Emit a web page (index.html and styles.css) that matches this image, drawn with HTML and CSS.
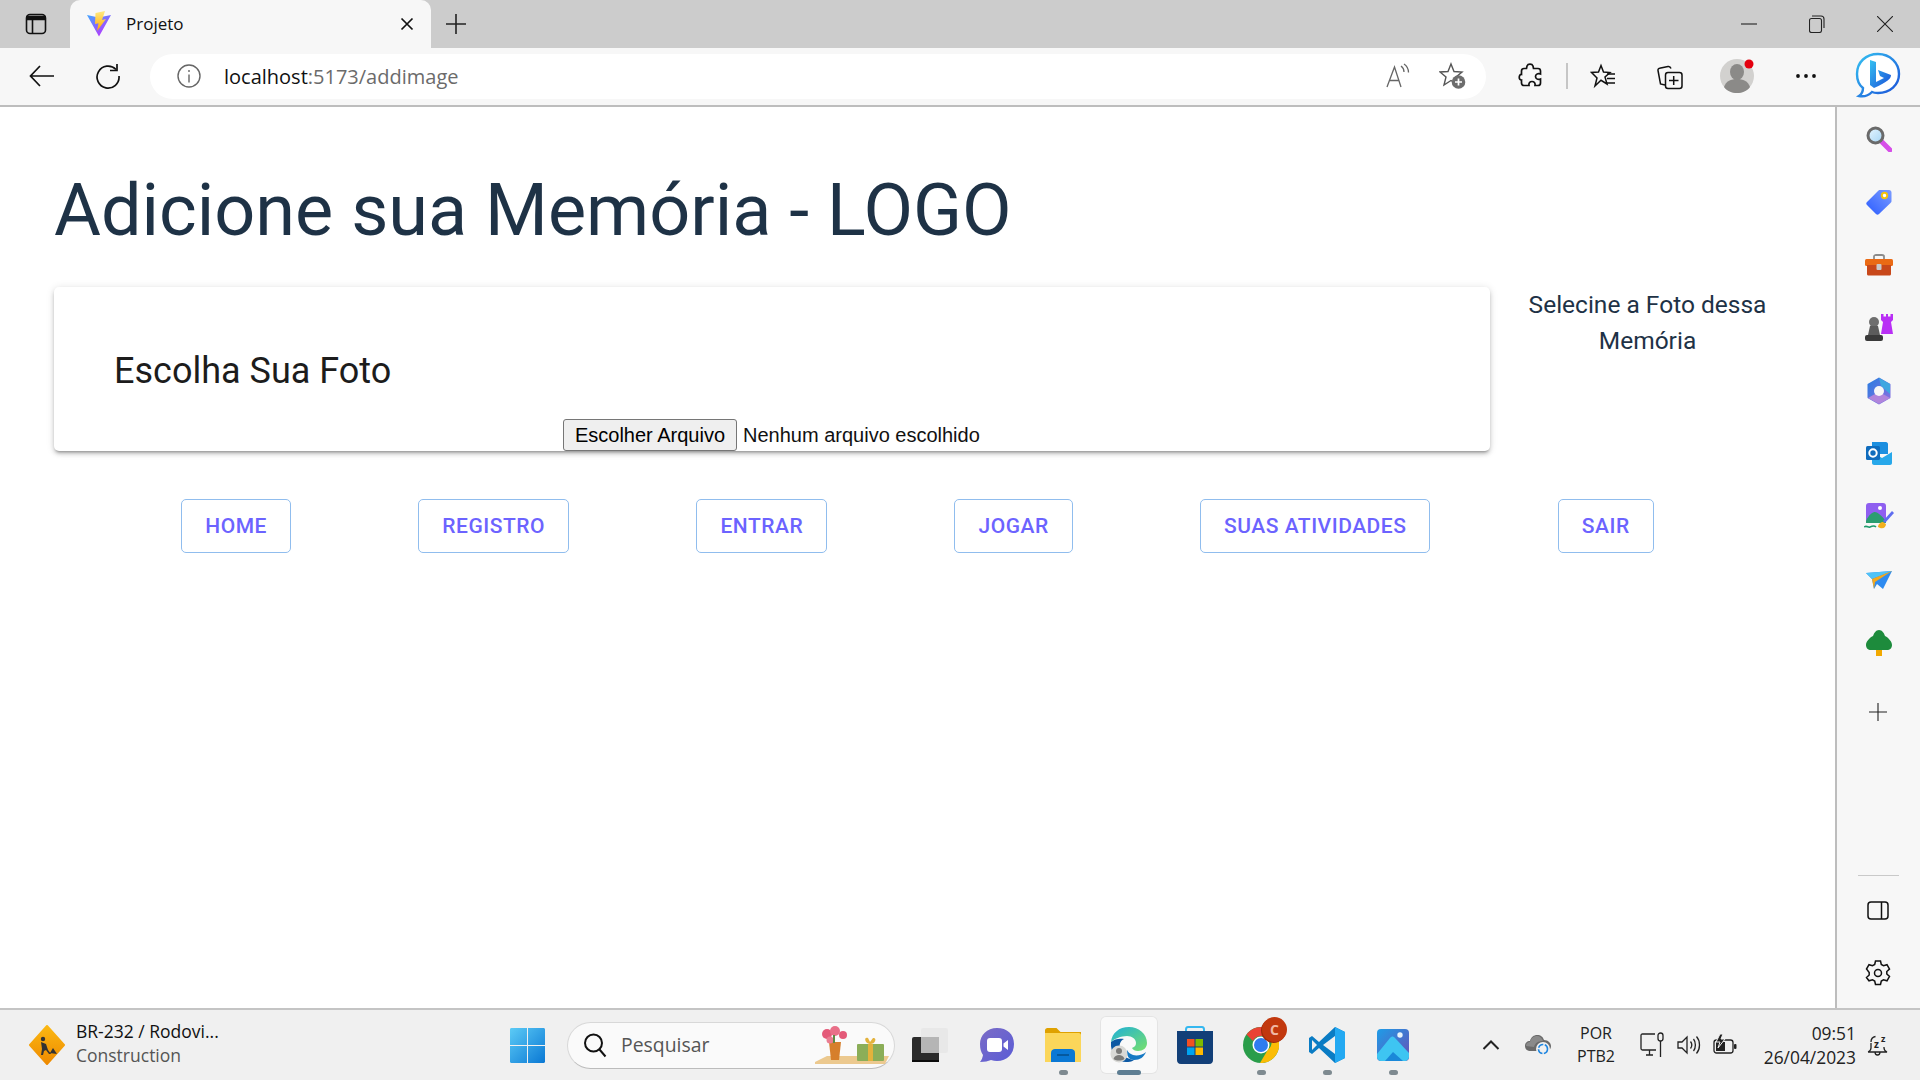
FILE: index.html
```html
<!DOCTYPE html>
<html lang="pt-BR">
<head>
<meta charset="utf-8">
<title>Projeto</title>
<link rel="stylesheet" href="styles.css">
</head>
<body>
<div class="window">
  <header class="tabstrip">
    <div class="strip-btn"><svg width="22" height="22" viewBox="0 0 22 22" fill="none" stroke="#111" stroke-width="1.6"><rect x="1.5" y="1.5" width="19" height="19" rx="3.5"/><path d="M2 3.5h18v3H2z" fill="#111"/><path d="M7.5 6.5v14"/></svg></div>
    <div class="tab">
      <svg class="tab-fav" width="26" height="26" viewBox="0 0 26 26"><defs><linearGradient id="vb" x1="0" y1="0" x2="0.7" y2="1"><stop offset="0" stop-color="#41a6ff"/><stop offset="1" stop-color="#bd34fe"/></linearGradient><linearGradient id="vy" x1="0" y1="0" x2="0" y2="1"><stop offset="0" stop-color="#ffea83"/><stop offset="1" stop-color="#ffa800"/></linearGradient></defs><path d="M1 4 12.500 6.500 25 4 13 25.500z" fill="url(#vb)"/><path d="M19 0 9.500 2 9 13 12.500 12.300 11 20 20 8 16 9z" fill="url(#vy)"/></svg>
      <span class="tab-title">Projeto</span>
      <svg class="tab-close" width="14" height="14" viewBox="0 0 14 14" stroke="#111" stroke-width="1.7"><path d="M1.500 1.500l11 11M12.500 1.500l-11 11"/></svg>
    </div>
    <div class="strip-plus"><svg width="22" height="22" viewBox="0 0 22 22" stroke="#222" stroke-width="1.600"><path d="M11 1v20M1 11h20"/></svg></div>
    <div class="win-controls">
      <div class="win-btn"><svg width="16" height="16" viewBox="0 0 16 16" stroke="#222" stroke-width="1.100"><path d="M0 8h16"/></svg></div>
      <div class="win-btn"><svg width="16" height="18" viewBox="0 0 16 18" fill="none" stroke="#222" stroke-width="1.100"><rect x="0.500" y="3.500" width="12" height="14" rx="2"/><path d="M3 1h9c2 0 3 1 3 3v9"/></svg></div>
      <div class="win-btn"><svg width="16" height="16" viewBox="0 0 16 16" stroke="#222" stroke-width="1.100"><path d="M0 0l16 16M16 0L0 16"/></svg></div>
    </div>
  </header>

  <nav class="toolbar">
    <div class="nav-btn"><svg width="26" height="24" viewBox="0 0 26 24" fill="none" stroke="#111" stroke-width="1.700"><path d="M25 12H2M11 2 1.500 12 11 22"/></svg></div>
    <div class="nav-btn"><svg width="26" height="26" viewBox="0 0 26 26" fill="none" stroke="#111" stroke-width="1.700"><path d="M21 6.500A11 11 0 1 0 24 13"/><path d="M22 1v6.500h-7"/></svg></div>
    <div class="address">
      <svg class="addr-info" width="24" height="24" viewBox="0 0 24 24" fill="none" stroke="#666" stroke-width="1.400"><circle cx="12" cy="12" r="11"/><path d="M12 10.500v8M12 6v2"/></svg>
      <span class="url"><span class="url-host">localhost</span>:5173/addimage</span>
      <svg class="addr-read" width="26" height="26" viewBox="0 0 26 26" fill="none" stroke="#666" stroke-width="1.300"><path d="M1 24 8.500 4 15 24M3.500 17.500H13"/><path d="M15 3c2 1.500 3 3.500 3 6M18 1c3 2 4.500 5 4.500 8.500"/></svg>
      <svg class="addr-star" width="28" height="28" viewBox="0 0 28 28"><path d="M12 2l3 7.500 8 .5-6 5 2 8-7-4.500L5 23l2-8-6-5 8-.5z" fill="none" stroke="#555" stroke-width="1.400"/><circle cx="19.500" cy="20" r="6.800" fill="#6c6c6c"/><path d="M19.500 16.500v7M16 20h7" stroke="#fff" stroke-width="1.700"/></svg>
    </div>
    <div class="tool tool-ext"><svg width="24" height="26" viewBox="0 0 24 26" fill="none" stroke="#111" stroke-width="1.700"><path d="M9 3c1-2.500 5-2.500 6 0l.5 2.500H20c1.500 0 2.500 1 2.500 2.500v3c-3-1-5 .5-5 2.500s2 3.500 5 2.500v4c0 1.500-1 2.500-2.500 2.500h-3c.5-2.500-1-4-3-4s-3.500 1.500-3 4H6c-1.500 0-2.500-1-2.500-2.500v-3c-3 .5-3-6 0-5.500V8C3.500 6.500 4.500 5.500 6 5.500h2.500z"/></svg></div>
    <div class="tool-sep"></div>
    <div class="tool tool-fav"><svg width="26" height="26" viewBox="0 0 26 26" fill="none" stroke="#111" stroke-width="1.500"><path d="M11 2.500 13.500 9l6.500.5-5 4.500 2 7-6-3.700L5 23l2-8-5.500-5.500 7-.5z"/><path d="M17 11h8M17 15.500h8M17 20h8"/></svg></div>
    <div class="tool tool-coll"><svg width="26" height="28" viewBox="0 0 26 28" fill="none" stroke="#111" stroke-width="1.500"><path d="M8 23 3.500 22 1 8.500c-.2-1 .3-2 1.500-2.200L11 4.500c1.500-.3 2.500.5 3 2"/><rect x="8.500" y="10.500" width="16.500" height="16" rx="2.500"/><path d="M16.700 14v9M12 18.500h9.500"/></svg></div>
    <div class="tool tool-avatar">
      <svg width="36" height="36" viewBox="0 0 36 36"><circle cx="17" cy="18" r="17" fill="#d2d1cf"/><ellipse cx="17" cy="14" rx="7" ry="8" fill="#8b8a88"/><path d="M4 29c2-6 7-8 13-8s11 2 13 8c-3 4-8 6-13 6S7 33 4 29z" fill="#8b8a88"/><circle cx="29" cy="6" r="4.500" fill="#e4000f"/></svg>
    </div>
    <div class="tool tool-more"><svg width="22" height="6" viewBox="0 0 22 6" fill="#111"><circle cx="3" cy="3" r="1.900"/><circle cx="11" cy="3" r="1.900"/><circle cx="19" cy="3" r="1.900"/></svg></div>
    <div class="tool tool-bing">
      <svg width="46" height="46" viewBox="0 0 46 46"><defs><linearGradient id="bg1" x1="0" y1="0" x2="1" y2="1"><stop offset="0" stop-color="#35c1f1"/><stop offset="1" stop-color="#1a4fd8"/></linearGradient></defs><path d="M23 2C11 2 2 10 2 22c0 6 2 11 6 14 0 3-1 6-4 8 5 1 10-1 13-4 2 1 4 1 6 1 12 0 21-8 21-19S35 2 23 2z" fill="#fff" stroke="url(#bg1)" stroke-width="2.400"/><path d="M15 8l6 2v20l8-4-4-2-2-6 13 5c0 4-4 7-17 13l-4-3z" fill="url(#bg1)"/></svg>
    </div>
  </nav>

  <div class="body">
    <main class="page">
      <h1 class="title">Adicione sua Memória - LOGO</h1>
      <div class="content">
        <section class="card">
          <h2 class="card-title">Escolha Sua Foto</h2>
          <div class="file-row"><button class="file-btn" type="button">Escolher Arquivo</button><span class="file-name">Nenhum arquivo escolhido</span></div>
        </section>
        <p class="hint">Selecine a Foto dessa Memória</p>
      </div>
      <div class="actions">
        <a class="action">Home</a>
        <a class="action">Registro</a>
        <a class="action">Entrar</a>
        <a class="action">Jogar</a>
        <a class="action">Suas Atividades</a>
        <a class="action">Sair</a>
      </div>
    </main>

    <aside class="sidebar">
      <div class="side-slot"><svg width="26" height="26" viewBox="0 0 26 26"><defs><linearGradient id="sg" x1="0" y1="0" x2="1" y2="1"><stop offset="0" stop-color="#e8f6ff"/><stop offset="1" stop-color="#a4d4f4"/></linearGradient></defs><path d="M15 15l9 9" stroke="#d64ee8" stroke-width="5" stroke-linecap="round"/><circle cx="9.500" cy="9.500" r="7.500" fill="url(#sg)" stroke="#6a6a6a" stroke-width="3"/></svg></div>
      <div class="side-slot"><svg width="26" height="26" viewBox="0 0 26 26"><defs><linearGradient id="tg" x1="0" y1="1" x2="1" y2="0"><stop offset="0" stop-color="#2a5cff"/><stop offset="1" stop-color="#7c9cff"/></linearGradient></defs><path d="M14 1h9c1.500 0 2.500 1 2.500 2.500V12c0 1-.5 1.500-1 2L13 25c-1 1-2 1-3 0L1 16c-1-1-1-2 0-3L12 2c.5-.5 1-1 2-1z" fill="url(#tg)"/><circle cx="18.500" cy="6.500" r="2.700" fill="#fff" stroke="#f4c20d" stroke-width="2"/></svg></div>
      <div class="side-slot"><svg width="28" height="22" viewBox="0 0 28 22"><path d="M9 6V2.500C9 1.500 10 1 11 1h6c1 0 2 .5 2 1.500V6" fill="none" stroke="#8c8c8c" stroke-width="1.800"/><rect y="5" width="28" height="7" rx="1.500" fill="#ea6a14"/><path d="M2 11h24v9c0 1-1 1.500-1.500 1.500h-21C3 21.500 2 21 2 20z" fill="#c8481a"/><rect x="11.500" y="10" width="5" height="6" rx="1" fill="#c9c9c9"/></svg></div>
      <div class="side-slot"><svg width="28" height="28" viewBox="0 0 28 28"><circle cx="9" cy="8" r="5" fill="#6e6e6e"/><path d="M5 12h8l2 9H3z" fill="#5c5c5c"/><rect y="21" width="18" height="6" rx="2" fill="#3a3a3a"/><path d="M16 0h2.500v2.500H21V0h2v2.500h2.500V0H28v6l-2 2 2 12H16l2-12-2-2z" fill="#b92ff5"/></svg></div>
      <div class="side-slot"><svg width="26" height="28" viewBox="0 0 26 28"><defs><linearGradient id="m1" x1="0" y1="0" x2="1" y2="1"><stop offset="0" stop-color="#2a7de1"/><stop offset="1" stop-color="#8b6ee0"/></linearGradient></defs><path d="M13 1.500l10.500 6v13L13 26.500l-10.500-6v-13z" fill="url(#m1)" stroke="url(#m1)" stroke-width="2" stroke-linejoin="round"/><path d="M13 1l11 6v10L15 9z" fill="#3fa7e0"/><path d="M2 21l11 6 11-6-7-4H9z" fill="#b085dc"/><circle cx="13" cy="14" r="5" fill="#f7f7f7"/></svg></div>
      <div class="side-slot"><svg width="26" height="24" viewBox="0 0 26 24"><path d="M6 0h14c1 0 2 1 2 2v10H6z" fill="#1c8fe0"/><path d="M6 10l10 6 10-6v11c0 1-1 2-2 2H8c-1 0-2-1-2-2z" fill="#28a8ea"/><rect y="4" width="14" height="14" rx="1.500" fill="#0f6cbd"/><circle cx="7" cy="11" r="3.700" fill="none" stroke="#fff" stroke-width="2"/></svg></div>
      <div class="side-slot"><svg width="30" height="28" viewBox="0 0 30 28"><rect x="2" width="20" height="20" rx="3" fill="#8f5ff0"/><circle cx="16" cy="5" r="2" fill="#fff"/><path d="M2 18c3-7 7-9 9-9s6 3 11 9v2H2z" fill="#2a9d6f"/><path d="M19 18 28 8l2 2-9 10z" fill="#5f6df0"/><path d="M14 24c0-3 3-5 5-5l3 2c0 3-3 6-8 3z" fill="#f2b01e"/><path d="M0 24c3-2 4 1 6 0s4-2 6 0" fill="none" stroke="#1c9b6a" stroke-width="1.500"/></svg></div>
      <div class="side-slot"><svg width="26" height="18" viewBox="0 0 26 18"><path d="M0 2 26 0 17 18 11 13 8 18 6 8z" fill="#2e8bf0"/><path d="M0 2 26 0 6 8z" fill="#4fc3f7"/><path d="M6 8 26 0 9 11 8 18z" fill="#f5a81c"/></svg></div>
      <div class="side-slot"><svg width="26" height="26" viewBox="0 0 26 26"><rect x="10" y="18" width="6" height="8" fill="#f2a900"/><path d="M13 0c3 0 5 3 6 6 4 2 7 6 7 9 0 3-2 5-5 5H5c-3 0-5-2-5-5 0-3 3-7 7-9 1-3 3-6 6-6z" fill="#1d8b3c"/></svg></div>
      <div class="side-slot side-plus"><svg width="18" height="18" viewBox="0 0 18 18" stroke="#222" stroke-width="1.100"><path d="M9 0v18M0 9h18"/></svg></div>
      <div class="side-bottom">
        <div class="side-rule"></div>
        <div class="side-slot side-panel"><svg width="22" height="19" viewBox="0 0 22 19" fill="none" stroke="#111" stroke-width="1.500"><rect x="1" y="1" width="20" height="17" rx="3"/><path d="M14.500 1v17"/></svg></div>
        <div class="side-slot side-gear"><svg width="26" height="26" viewBox="0 0 26 26" fill="none" stroke="#111" stroke-width="1.500"><circle cx="13" cy="13" r="3.500"/><path d="M10.500 1h5l.8 3.500 2.200 1.200 3.500-1 2.500 4.300-2.700 2.500v2.500l2.700 2.500-2.500 4.300-3.500-1-2.200 1.200-.8 3.500h-5l-.8-3.500-2.200-1.200-3.500 1L1.500 17.500 4.200 15v-2.500L1.500 9 4 4.700l3.500 1 2.200-1.200z"/></svg></div>
      </div>
    </aside>
  </div>

  <footer class="taskbar">
    <div class="weather">
      <svg width="38" height="40" viewBox="0 0 38 40"><defs><linearGradient id="wg" x1="0" y1="0" x2="0" y2="1"><stop offset="0" stop-color="#fbb812"/><stop offset="1" stop-color="#ee8a00"/></linearGradient></defs><path d="M19 1 36 20 19 39 2 20z" fill="url(#wg)" stroke="url(#wg)" stroke-width="2" stroke-linejoin="round"/><circle cx="15" cy="14" r="2.200" fill="#333"/><path d="M13 17l5 2 2 6 3 4h-2l-3-4-2 1-1 4h-2l1-6zM22 28l3-5 4 6z" fill="#333"/></svg>
      <div class="weather-text"><span class="weather-name">BR-232 / Rodovi...</span><span class="weather-sub">Construction</span></div>
    </div>
    <div class="start"><svg width="35" height="35" viewBox="0 0 35 35"><defs><linearGradient id="w1" x1="0" y1="0" x2="1" y2="1"><stop offset="0" stop-color="#5ccbf6"/><stop offset="1" stop-color="#0a78d4"/></linearGradient></defs><path d="M1.500 0H17v17H0V1.500C0 .6.600 0 1.500 0zM18 0h15.500c.9 0 1.500.6 1.500 1.500V17H18zM0 18h17v17H1.500C.6 35 0 34.400 0 33.500zM18 18h17v15.500c0 .9-.6 1.500-1.500 1.500H18z" fill="url(#w1)"/></svg></div>
    <div class="search">
      <svg class="search-icon" width="24" height="26" viewBox="0 0 24 26" fill="none" stroke="#111" stroke-width="2"><circle cx="10.500" cy="11" r="8.500"/><path d="M16.500 17.500l6 7"/></svg>
      <span class="search-text">Pesquisar</span>
      <svg class="search-art" width="76" height="40" viewBox="0 0 76 40"><path d="M2 36 14 30H76L72 38H2z" fill="#ecc98f"/><path d="M16 16h12l-2 18H18z" fill="#d67f2c"/><circle cx="14" cy="8" r="5" fill="#e45a79"/><circle cx="22" cy="5" r="5" fill="#e96f88"/><circle cx="30" cy="9" r="4" fill="#e45a79"/><circle cx="17" cy="14" r="3.500" fill="#ea7d92"/><path d="M21 9v8" stroke="#5d8a45" stroke-width="2"/><rect x="44" y="18" width="27" height="17" rx="1" fill="#8bae58"/><rect x="55" y="18" width="5" height="17" fill="#e3b23c"/><path d="M57 18c-6-1-6-8-2-6l2 4 3-4c4-1 3 6-3 6z" fill="#e3b23c"/></svg>
    </div>
    <div class="apps">
      <div class="app"><svg width="38" height="36" viewBox="0 0 38 36"><rect y="10" width="27" height="25" rx="2" fill="#2b2b2b"/><rect y="33" width="27" height="2" fill="#0c0c0c"/><rect x="9" y="1" width="27" height="25" rx="2" fill="#e6e6e6" fill-opacity=".85"/><rect x="9" y="10" width="18" height="16" fill="#b5b5b5"/></svg></div>
      <div class="app"><svg width="36" height="36" viewBox="0 0 36 36"><defs><linearGradient id="tm" x1="0" y1="0" x2="1" y2="1"><stop offset="0" stop-color="#7b6cc6"/><stop offset="1" stop-color="#5a5cd6"/></linearGradient></defs><path d="M18 1C8 1 1 8 1 17c0 5 1 8 3 11-.5 3-1.500 5-3 7 5 0 8-1 11-2 2 .5 4 1 6 1 10 0 17-7 17-17S28 1 18 1z" fill="url(#tm)"/><rect x="8" y="11" width="15" height="14" rx="3" fill="#fff"/><path d="M24.500 16.500 29 13v10l-4.500-3.500z" fill="#fff"/></svg></div>
      <div class="app app-on"><svg width="36" height="34" viewBox="0 0 36 34"><path d="M0 2.500C0 1 1 0 2.500 0h9l4 4H36v6H0z" fill="#dfa100"/><path d="M0 5h34c1 0 2 1 2 2v27H0z" fill="#fbd65a"/><path d="M6 31V25c0-3 2-4 4-4h16c2 0 4 1 4 4v9H6z" fill="#0a78d4"/><path d="M12 27h12" stroke="#044f8c" stroke-width="1.500"/></svg><i class="dot"></i></div>
      <div class="app app-active"><svg width="38" height="38" viewBox="0 0 38 38"><defs><linearGradient id="e1" x1="0" y1="0" x2="1" y2="1"><stop offset="0" stop-color="#1eb0d8"/><stop offset="1" stop-color="#78e06c"/></linearGradient></defs><path d="M1 16C2 7 9 1 19 1c10 0 18 7 18 16 0 5-4 8-9 8-3 0-5-1-6-3 3-1 4-3 4-5 0-4-4-7-9-7C11 10 4 13 1 16z" fill="url(#e1)"/><path d="M1 16c3-3 9-4 13-3-4 2-5 6-4 10 1 5 6 10 14 11-3 2-5 2-8 2C8 36 0 28 1 16z" fill="#0c59a4"/><path d="M24 34c6 0 10-3 12-8-3 3-9 4-13 3-3-1-5-3-6-5-1 5 2 10 7 10z" fill="#1679c4"/><circle cx="9" cy="28" r="8.500" fill="#d9d9d6"/><circle cx="9" cy="25" r="3" fill="#7b7b79"/><path d="M3.500 33c1-3 3-4 5.500-4s4.500 1 5.500 4c-3 2-8 2-11 0z" fill="#7b7b79"/></svg><i class="dot dot-wide"></i></div>
      <div class="app"><svg width="36" height="38" viewBox="0 0 36 38"><path d="M9 8V3.500C9 2 10 1 11 1h14c1 0 2 1 2 2.500V8" fill="none" stroke="#35b8f0" stroke-width="2"/><path d="M0 5h36v29c0 2-1 4-4 4H4c-3 0-4-2-4-4z" fill="#123f78"/><rect x="10" y="13" width="7.500" height="7.500" fill="#f25022"/><rect x="18.500" y="13" width="7.500" height="7.500" fill="#7fba00"/><rect x="10" y="21.500" width="7.500" height="7.500" fill="#00a4ef"/><rect x="18.500" y="21.500" width="7.500" height="7.500" fill="#ffb900"/></svg></div>
      <div class="app app-on app-chrome"><svg width="36" height="36" viewBox="0 0 36 36"><circle cx="18" cy="18" r="18" fill="#2a9d4a"/><path d="M18 0a18 18 0 0 1 15.600 9H18a9 9 0 0 0-8 5L3.500 7.500A18 18 0 0 1 18 0z" fill="#ea4335"/><path d="M33.600 9A18 18 0 0 1 17 36l8-13.500a9 9 0 0 0 1-13.500z" fill="#fbbc05"/><circle cx="18" cy="18" r="8.500" fill="#fff"/><circle cx="18" cy="18" r="7" fill="#2f7cf0"/></svg><span class="chrome-badge">C</span><i class="dot"></i></div>
      <div class="app app-on"><svg width="36" height="36" viewBox="0 0 36 36"><path d="M26 0l10 5v26l-10 5L10 21 3 27 0 25V11l3-2 7 6z" fill="#0a7cc4"/><path d="M26 0l10 5v26l-10 5z" fill="#23a9f2"/><path d="M26 9 14 18l12 9z" fill="#f0f0f0"/><path d="M3 13l5 5-5 5z" fill="#f0f0f0"/></svg><i class="dot"></i></div>
      <div class="app app-on"><svg width="32" height="32" viewBox="0 0 32 32"><defs><linearGradient id="ph" x1="0" y1="0" x2="1" y2="1"><stop offset="0" stop-color="#1d9de8"/><stop offset="1" stop-color="#6a4fb5"/></linearGradient></defs><rect width="32" height="32" rx="4" fill="url(#ph)"/><circle cx="23" cy="6" r="2.700" fill="#eaf4fb"/><path d="M0 25 13 9c2-2 3-2 5 0l14 15v4c0 2-2 4-4 4H4c-2 0-4-2-4-4z" fill="#3ec5f2"/><path d="M8 32l8-9 10 9z" fill="#1a88d9"/></svg><i class="dot"></i></div>
    </div>
    <div class="tray">
      <div class="tray-slot tray-chev"><svg width="18" height="12" viewBox="0 0 18 12" fill="none" stroke="#222" stroke-width="2"><path d="M1.500 10 9 2.500 16.500 10"/></svg></div>
      <div class="tray-slot tray-cloud"><svg width="26" height="22" viewBox="0 0 26 22"><path d="M6 17C2 17 0 15 0 12s2-5 5-5c1-4 4-6 7-6 4 0 6 2 7 5 4 0 7 3 7 6 0 3-2 5-6 5z" fill="#6a6a6a"/><path d="M1 12c0-3 2-4 4-4 1-4 4-6 7-6 3 0 5 2 6 5-5 0-8 2-9 6z" fill="#8a8a8a"/><circle cx="18" cy="15" r="7" fill="#f0f0f0"/><circle cx="18" cy="15" r="4.500" fill="none" stroke="#1f86e0" stroke-width="1.600" stroke-dasharray="6 1.500"/></svg></div>
      <div class="lang"><span>POR</span><span>PTB2</span></div>
      <div class="tray-slot tray-net"><svg width="24" height="26" viewBox="0 0 24 26" fill="none" stroke="#222" stroke-width="1.300"><path d="M15 2H2.500C1.500 2 1 2.500 1 3.500v13c0 1 .5 1.500 1.500 1.500H16M6 23h7M9.500 18v5"/><rect x="18" y="1" width="5" height="8" rx="2.500"/><path d="M20.500 9v16"/></svg></div>
      <div class="tray-slot tray-vol"><svg width="24" height="20" viewBox="0 0 24 20" fill="none" stroke="#222" stroke-width="1.300"><path d="M1 7v6h4l5 5V2L5 7z"/><path d="M13.500 6.500c1.500 2 1.500 5 0 7M16.500 4c2.500 3 2.500 9 0 12M19.500 1.500c4 4.500 4 12.500 0 17"/></svg></div>
      <div class="tray-slot tray-bat"><svg width="24" height="22" viewBox="0 0 24 22"><rect x="1" y="6" width="19" height="13" rx="2.500" fill="none" stroke="#222" stroke-width="1.300"/><rect x="21" y="10" width="2.500" height="5" rx="1" fill="#222"/><rect x="3" y="8" width="9" height="9" fill="#222"/><path d="M7 0 3 8h4l-2 6 7-9H8l2-5z" fill="#222" stroke="#f0f0f0" stroke-width="1"/></svg></div>
      <div class="clock"><span>09:51</span><span>26/04/2023</span></div>
      <div class="tray-slot tray-bell"><svg width="24" height="24" viewBox="0 0 24 24" fill="none" stroke="#222" stroke-width="1.300"><path d="M4 9c0-3 2-5 4.500-5.500M1 19c2-1 3-2 3-4v-5M17 14v1c0 2 1 3 3 4H1M8 19c0 4 5 4 5 0"/><text class="bell-z" x="7" y="15">z</text><text class="bell-z bell-z2" x="14" y="9">z</text></svg></div>
    </div>
  </footer>
</div>
</body>
</html>
```

FILE: styles.css
```css
* { box-sizing: border-box; }
html, body { margin: 0; height: 100%; }
body { font-family: "Open Sans", "Liberation Sans", sans-serif; color: #111; background: #fff; overflow: hidden; }
svg { display: block; flex: none; }

.window { display: flex; flex-direction: column; width: 1920px; height: 1080px; }

/* tab strip */
.tabstrip { display: flex; align-items: stretch; height: 48px; background: #cccccc; flex: none; }
.strip-btn { width: 70px; display: flex; align-items: center; justify-content: center; padding-left: 2px; }
.tab { width: 361px; display: flex; align-items: center; background: #f7f7f7; border-radius: 10px 10px 0 0; padding: 0 17px 0 16px; }
.tab-title { margin-left: 14px; margin-top: -2px; font-size: 17px; color: #111; flex: 1; }
.strip-plus { width: 50px; display: flex; align-items: center; justify-content: center; }
.win-controls { margin-left: auto; display: flex; padding-right: 1px; }
.win-btn { width: 68px; display: flex; align-items: center; justify-content: center; }

/* toolbar */
.toolbar { display: flex; align-items: center; height: 59px; padding: 0 0 1px 9px; background: #f7f7f7; border-bottom: 2px solid #bdbdbd; flex: none; }
.nav-btn { width: 66px; display: flex; align-items: center; justify-content: center; }
.address { width: 1336px; height: 45px; margin-left: 9px; background: #fff; border-radius: 23px; display: flex; align-items: center; padding: 0 13px 0 27px; }
.url { margin-left: 23px; font-size: 20px; color: #6b6b6b; flex: 1; }
.url-host { color: #111; }
.addr-read { margin-right: 27px; }
.addr-star { margin-right: 6px; }
.tool { display: flex; align-items: center; justify-content: center; height: 100%; }
.tool-ext { width: 60px; margin-left: 14px; }
.tool-sep { width: 2px; height: 26px; background: #c6c6c6; margin-left: 6px; }
.tool-fav { width: 66px; margin-left: 2px; }
.tool-coll { width: 68px; }
.tool-avatar { width: 68px; }
.tool-more { width: 68px; }
.tool-bing { width: 76px; padding-bottom: 3px; }

/* body */
.body { flex: 1; display: flex; min-height: 0; }
.page { flex: 1; padding: 0 54px; min-width: 0; background: #fff; }
.title { margin: 61px 0 33px; font: 400 72px/86px Roboto, sans-serif; color: #1e3246; }
.content { display: flex; align-items: flex-start; }
.card { width: 1436px; height: 164px; flex: none; background: #fff; border-radius: 5px; box-shadow: 0 3px 3px -2px rgba(0,0,0,.3), 0 3px 4px rgba(0,0,0,.16), 0 1px 8px rgba(0,0,0,.12); display: flex; flex-direction: column; padding: 0 0 0 60px; }
.card-title { margin: 63px 0 0; font: 400 36px/1.2 Roboto, sans-serif; color: #1c1c1c; }
.file-row { margin-top: auto; display: flex; align-items: center; padding-left: 449px; font: 20px "Liberation Sans", Arial, sans-serif; color: #111; }
.file-btn { width: 174px; height: 32px; padding: 0; font: inherit; color: #000; background: #efefef; border: 1px solid #767676; border-radius: 3px; }
.file-name { margin-left: 6px; }
.hint { flex: 1; margin: 0; padding: 0 0 0 24px; text-align: center; font: 400 24.5px/36px Roboto, sans-serif; color: #1e3246; }
.actions { display: flex; justify-content: space-evenly; margin-top: 48px; }
.action { display: block; padding: 10px 23px; border: 1px solid #90bdee; border-radius: 5px; font: 500 21px/32px Roboto, sans-serif; letter-spacing: .52px; text-transform: uppercase; color: #6c63ff; }

/* sidebar */
.sidebar { width: 85px; flex: none; background: #f7f7f7; border-left: 2px solid #bdbdbd; display: flex; flex-direction: column; }
.side-slot { height: 63px; flex: none; display: flex; align-items: center; justify-content: center; }
.side-plus { margin-top: 6px; padding-right: 2px; }
.side-bottom { margin-top: auto; display: flex; flex-direction: column; }
.side-rule { height: 1px; margin: 0 21px; background: #c9c9c9; }
.side-panel { height: 69px; padding-right: 2px; }
.side-gear { height: 63px; padding: 0 2px 7px 0; }

/* taskbar */
.taskbar { height: 72px; flex: none; display: flex; align-items: center; background: #f0f0f0; border-top: 2px solid #c4c4c4; }
.weather { width: 510px; flex: none; display: flex; align-items: center; padding-left: 28px; gap: 10px; }
.weather-text { display: flex; flex-direction: column; margin-top: -3px; font-size: 17.5px; line-height: 23.5px; }
.weather-sub { color: #555; }
.start { width: 35px; flex: none; }
.search { width: 328px; height: 47px; margin-left: 22px; flex: none; background: #fafafa; border: 1px solid #d8d8d8; border-bottom-color: #bcbcbc; border-radius: 24px; display: flex; align-items: center; padding-left: 15px; }
.search-text { margin-left: 14px; margin-top: -2px; font-size: 19.4px; color: #555; flex: 1; }
.search-art { margin-right: 5px; margin-top: 2px; }
.apps { display: flex; margin-left: 3px; flex: none; }
.app { position: relative; width: 66px; height: 58px; display: flex; align-items: center; justify-content: center; }
.app-active { background: #f9f9f9; border-radius: 6px; box-shadow: 0 0 0 1px #e4e4e4 inset; margin: 0 4px; width: 58px; }
.dot { position: absolute; left: 50%; bottom: -1px; width: 9px; height: 5px; margin-left: -4px; border-radius: 3px; background: #7e8a90; }
.dot-wide { width: 24px; margin-left: -12px; background: #5d7d92; }
.chrome-badge { position: absolute; top: 1px; right: 7px; width: 25px; height: 25px; border-radius: 50%; background: #c2380e; box-shadow: -1px 1px 0 #9c2c0a; color: #f0b8a4; font: 700 14px/25px "Open Sans", sans-serif; text-align: center; }
.tray { display: flex; align-items: center; margin-left: 45px; flex: none; }
.tray-slot { display: flex; align-items: center; justify-content: center; }
.tray-chev { width: 40px; }
.tray-cloud { width: 40px; margin-left: 7px; }
.lang { width: 60px; margin-left: 8px; display: flex; flex-direction: column; align-items: center; font-size: 16px; line-height: 23px; color: #222; }
.tray-net { width: 36px; margin-left: 8px; }
.tray-vol { width: 37px; }
.tray-bat { width: 36px; }
.clock { width: 113px; display: flex; flex-direction: column; align-items: flex-end; font-size: 17.4px; line-height: 24px; color: #222; }
.tray-bell { width: 46px; }
.bell-z { font: 700 10px "Open Sans", sans-serif; fill: #222; stroke: none; }
.bell-z2 { font-size: 9px; }
```
